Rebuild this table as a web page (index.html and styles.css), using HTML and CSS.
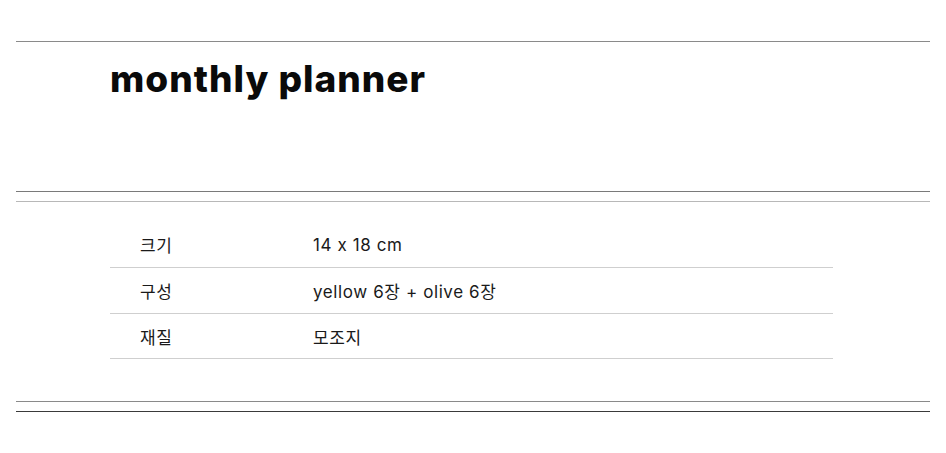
FILE: index.html
```html
<!DOCTYPE html>
<html lang="ko">
<head>
<meta charset="utf-8">
<link rel="stylesheet" href="styles.css">
</head>
<body>
<div class="page">
  <div class="rule rule-top"></div>
  <div class="title-block">
    <h1 class="title">monthly planner</h1>
  </div>
  <div class="rule rule-a"></div>
  <div class="rule rule-b"></div>
  <div class="spec">
    <div class="row"><div class="label">크기</div><div class="value">14 x 18 cm</div></div>
    <div class="row"><div class="label">구성</div><div class="value">yellow 6장 + olive 6장</div></div>
    <div class="row"><div class="label">재질</div><div class="value">모조지</div></div>
  </div>
  <div class="rule rule-c"></div>
  <div class="rule rule-d"></div>
</div>
</body>
</html>
```
FILE: styles.css
```css
html, body { margin: 0; padding: 0; background: #fff; }
body { font-family: "Inter", "Noto Sans CJK KR", sans-serif; color: #111; font-feature-settings: "calt" 0; }
.page { padding: 41px 16px 0 16px; width: 914px; }
.rule { height: 1px; }
.rule-top { background: #8a8a8a; }
.title-block { height: 149px; padding-left: 94px; }
.title { margin: 0; padding-top: 14px; font-size: 37px; font-weight: 800; line-height: 46px; letter-spacing: 1px; color: #0a0a0a; }
.rule-a { background: #7a7a7a; }
.rule-b { background: #b8b8b8; margin-top: 9px; }
.spec { margin: 20px 0 42px 94px; width: 723px; }
.row { display: flex; height: 45px; border-bottom: 1px solid #cfcfcf; align-items: center; font-size: 17px; letter-spacing: 0.6px; color: #1a1a1a; }
.row:last-child { height: 44px; }
.label { width: 203px; padding-left: 30px; box-sizing: border-box; }
.value { flex: 1; }
.rule-c { background: #8a8a8a; }
.rule-d { background: #3a3a3a; margin-top: 9px; }
```
